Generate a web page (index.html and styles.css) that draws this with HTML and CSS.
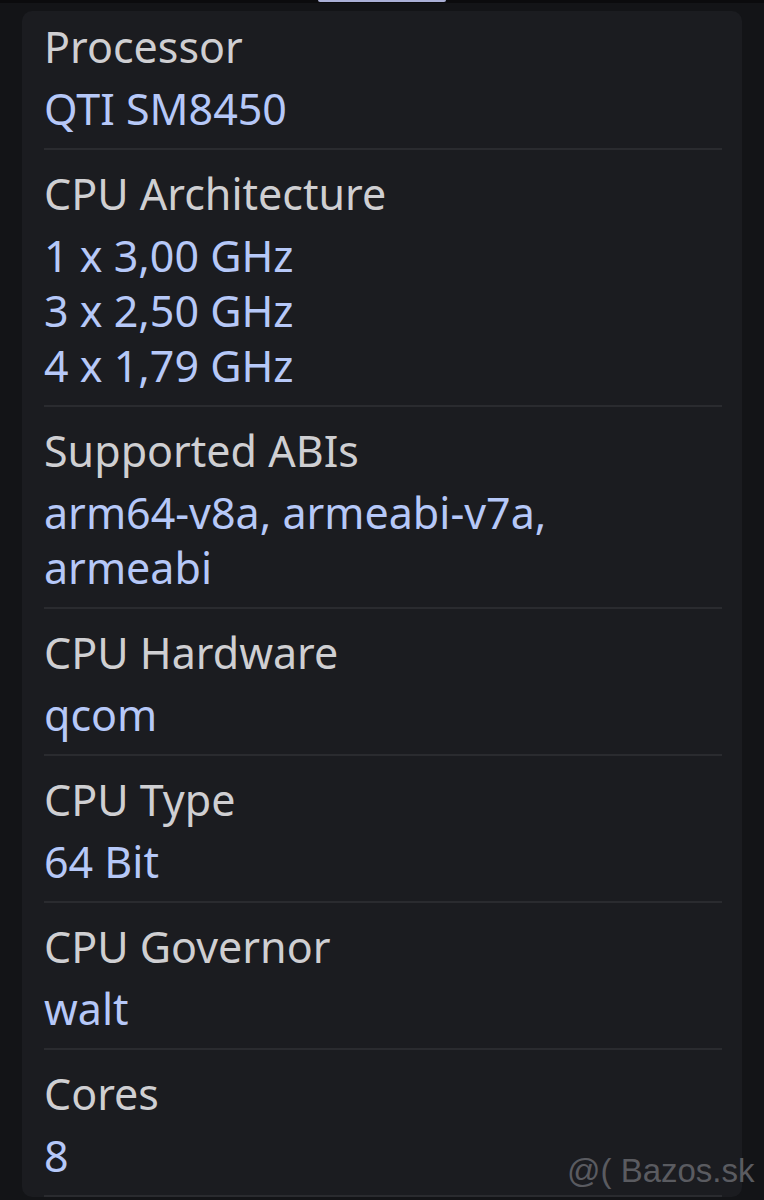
FILE: index.html
```html
<!DOCTYPE html>
<html>
<head>
<meta charset="utf-8">
<link rel="stylesheet" href="styles.css">
</head>
<body>
<div class="topbar"><div class="pill"></div></div>
<div class="card">
  <div class="item first">
    <div class="label">Processor</div>
    <div class="value">QTI SM8450</div>
  </div>
  <div class="item">
    <div class="label">CPU Architecture</div>
    <div class="value">1 x 3,00 GHz<br>3 x 2,50 GHz<br>4 x 1,79 GHz</div>
  </div>
  <div class="item">
    <div class="label">Supported ABIs</div>
    <div class="value">arm64-v8a, armeabi-v7a,<br>armeabi</div>
  </div>
  <div class="item">
    <div class="label">CPU Hardware</div>
    <div class="value">qcom</div>
  </div>
  <div class="item">
    <div class="label">CPU Type</div>
    <div class="value">64 Bit</div>
  </div>
  <div class="item">
    <div class="label">CPU Governor</div>
    <div class="value">walt</div>
  </div>
  <div class="item">
    <div class="label">Cores</div>
    <div class="value">8</div>
  </div>
</div>
<div class="watermark">@( Bazos.sk</div>
</body>
</html>
```
FILE: styles.css
```css
html, body {
  margin: 0;
  padding: 0;
  background: #131417;
  height: 1200px;
  overflow: hidden;
}
body {
  position: relative;
  font-family: "Noto Sans", sans-serif;
}
.topbar {
  height: 3px;
  background: #0b0b0d;
  display: flex;
  justify-content: center;
}
.pill {
  width: 128px;
  height: 2px;
  background: #aab0d6;
  border-radius: 0 0 3px 3px;
}
.card {
  margin: 8px 22px 0 22px;
  background: #1b1c20;
  border-radius: 10px;
  padding: 0 20px 0 22px;
}
.item {
  padding: 16px 0 12px 0;
  border-bottom: 2px solid #2a2b2f;
}
.item.first {
  padding-top: 8px;
}
.label {
  font-size: 43px;
  line-height: 55px;
  color: #cfcfd2;
  margin-bottom: 7px;
}
.value {
  font-size: 43px;
  line-height: 55px;
  color: #b6c8f8;
}
.watermark {
  position: absolute;
  left: 567px;
  top: 1152px;
  font-family: "Liberation Sans", sans-serif;
  font-size: 33px;
  color: #5a5b60;
}
```
